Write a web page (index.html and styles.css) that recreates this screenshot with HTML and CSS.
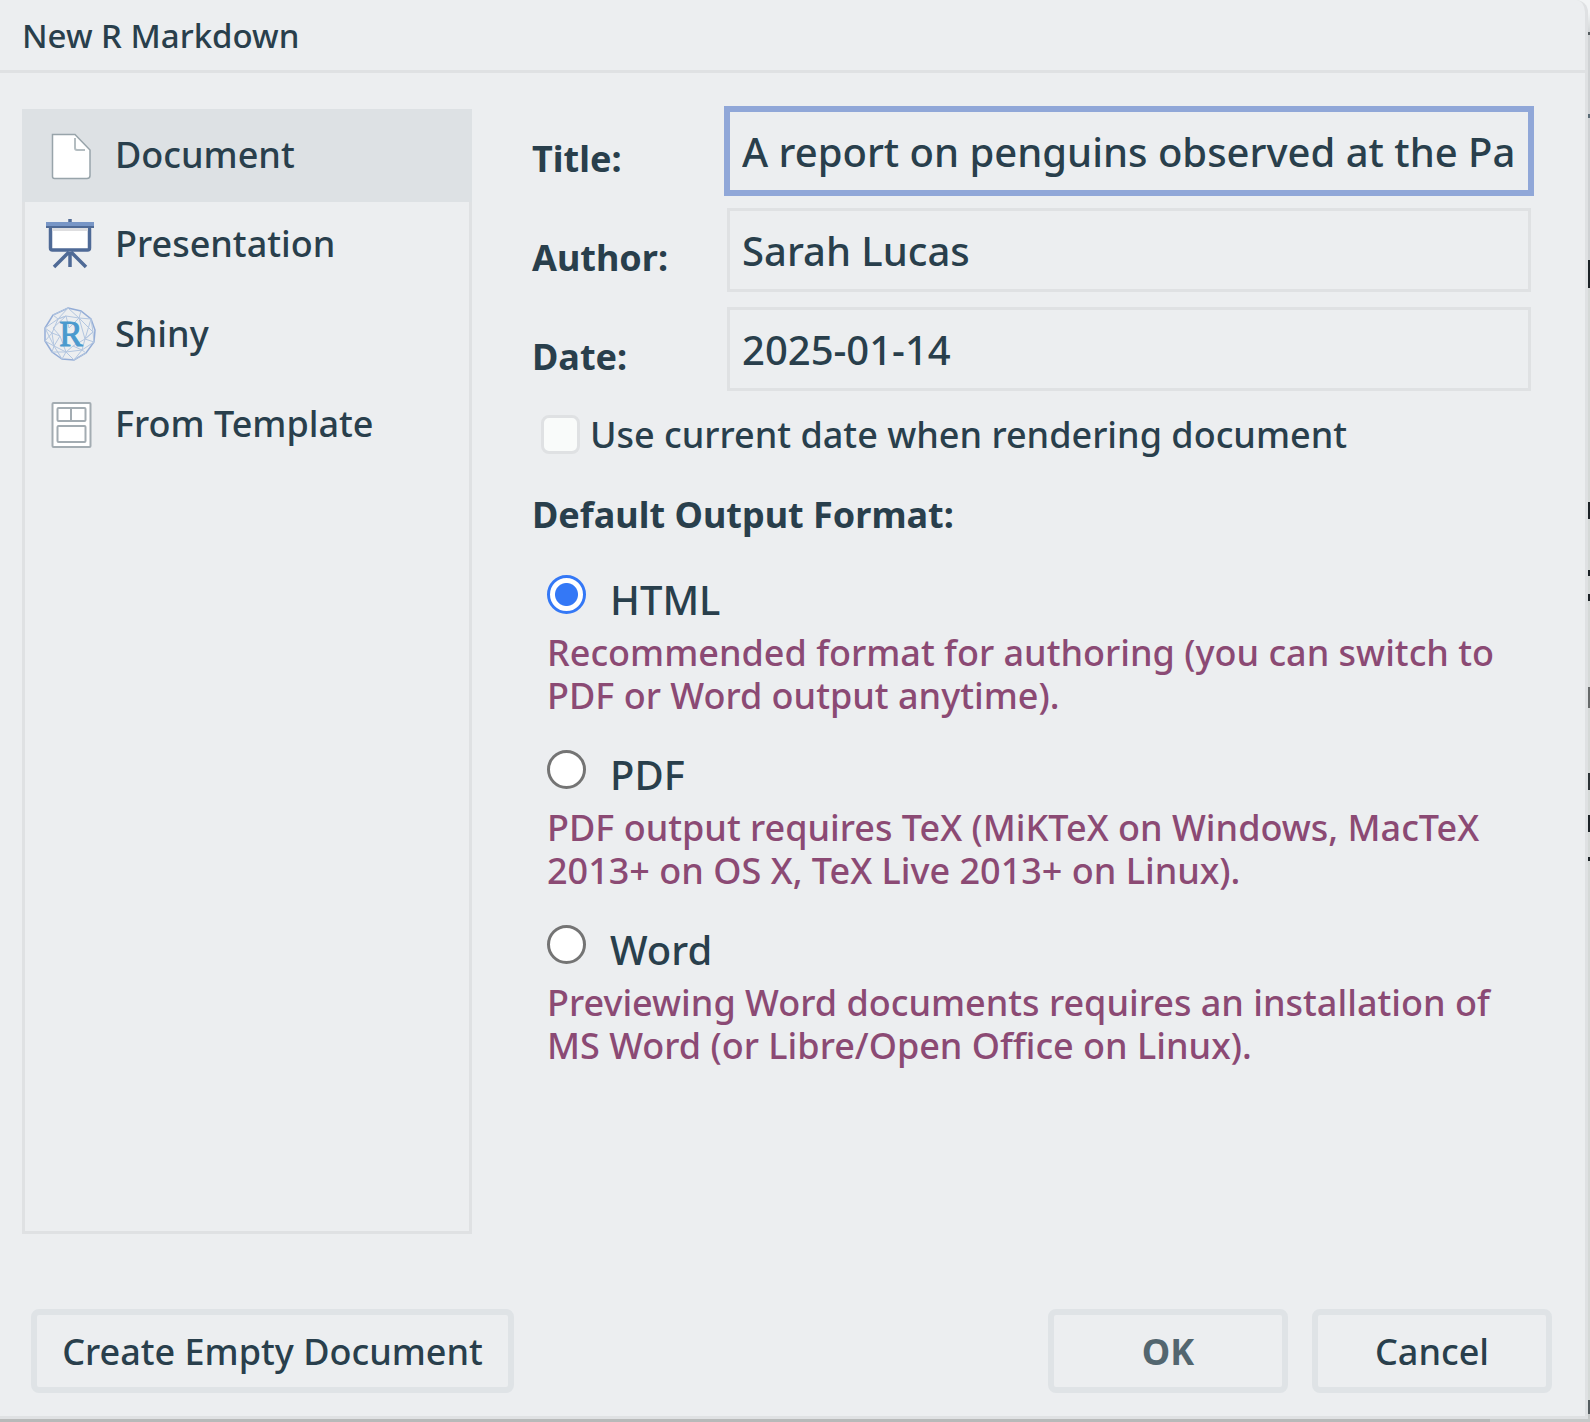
FILE: index.html
```html
<!DOCTYPE html>
<html lang="en">
<head>
<meta charset="utf-8">
<title>New R Markdown</title>
<link rel="stylesheet" href="styles.css">
</head>
<body>
<form class="dialog" role="dialog" aria-labelledby="dialog-title">
  <header class="dialog-header"><h1 class="dialog-title" id="dialog-title">New R Markdown</h1></header>
  <div class="dialog-body">
    <nav class="templates" aria-label="Template">
      <button type="button" class="template selected">
        <svg class="icon" viewBox="0 0 60 60" aria-hidden="true">
          <path d="M12.500 9.500H35L50 25V50.500Q50 53.500 47 53.500H14.500Q12.500 53.500 12.500 51.500Z" fill="#fff" stroke="#98a4aa" stroke-width="1.500"/>
          <path d="M35 13V23Q35 25 37 25H45" fill="none" stroke="#b4bdc1" stroke-width="2"/>
        </svg>
        <span>Document</span>
      </button>
      <button type="button" class="template">
        <svg class="icon" viewBox="0 0 60 60" aria-hidden="true">
          <path d="M30 6V11M30 39V54M29 39L14 54M31 39L46 54" fill="none" stroke="#4f6a96" stroke-width="3.500"/>
          <rect x="10.500" y="14" width="39" height="23" rx="2" fill="#fff" stroke="#4f6a96" stroke-width="3.500"/>
          <path d="M12 16.500H48" stroke="#dedee0" stroke-width="3"/>
          <path d="M6 9H54V15H6Z" fill="#4f6a96"/>
          <path d="M6 9H54V13H6Z" fill="#7896c6"/>
        </svg>
        <span>Presentation</span>
      </button>
      <button type="button" class="template">
        <svg class="icon" viewBox="0 -1 60 60" aria-hidden="true">
          <g fill="none" stroke="#b3c6e0" stroke-width="1">
            <path d="M28 4L41 7L51 15L55 26L54 38L46 49L34 56L22 55L12 48L5 37L5 24L13 11Z" stroke="#94add7" stroke-width="1.500"/>
            <path d="M13 11L28 4L39 14L51 15L53 28L45 35L54 38L42 46L46 49L34 56L26 48L22 55L14 42L5 37L12 29L5 24L18 15L28 4M41 7L39 14L26 12L18 15L13 11M18 15L12 29L14 42L26 48L42 46L45 35L39 14M51 15L45 35M5 24L14 42L12 48L26 48L34 56L42 46M18 15L26 12L29 24L39 14L53 28M12 29L20 32L14 42M20 32L26 48L33 42L42 46M26 12L13 24L20 32M33 42L45 35L53 28L54 38"/>
          </g>
          <text x="31" y="42" class="shiny-letter">R</text>
        </svg>
        <span>Shiny</span>
      </button>
      <button type="button" class="template">
        <svg class="icon" viewBox="0 0 60 60" aria-hidden="true">
          <g fill="#fff" stroke="#a3acb2" stroke-width="2">
            <rect x="12.500" y="10" width="38" height="44" rx="1"/>
            <rect x="17.500" y="15" width="28" height="13" rx="1"/>
            <path d="M31 15V28"/>
            <rect x="17.500" y="33" width="28" height="16" rx="1"/>
          </g>
        </svg>
        <span>From Template</span>
      </button>
    </nav>
    <main class="options">
      <div class="fields">
        <label class="field-label" for="title">Title:</label>
        <input class="field focused" id="title" type="text" value="A report on penguins observed at the Pa">
        <label class="field-label" for="author">Author:</label>
        <input class="field" id="author" type="text" value="Sarah Lucas">
        <label class="field-label" for="date">Date:</label>
        <input class="field" id="date" type="text" value="2025-01-14">
      </div>
      <label class="check-row"><input class="check" type="checkbox"><span>Use current date when rendering document</span></label>
      <fieldset class="formats">
        <legend class="formats-title">Default Output Format:</legend>
        <div class="format">
          <label class="format-row"><input class="radio" type="radio" name="format" checked aria-describedby="html-note"><span class="format-name">HTML</span></label>
          <p class="format-note" id="html-note">Recommended format for authoring (you can switch to PDF or Word output anytime).</p>
        </div>
        <div class="format">
          <label class="format-row"><input class="radio" type="radio" name="format" aria-describedby="pdf-note"><span class="format-name">PDF</span></label>
          <p class="format-note" id="pdf-note">PDF output requires TeX (MiKTeX on Windows, MacTeX 2013+ on OS X, TeX Live 2013+ on Linux).</p>
        </div>
        <div class="format">
          <label class="format-row"><input class="radio" type="radio" name="format" aria-describedby="word-note"><span class="format-name">Word</span></label>
          <p class="format-note" id="word-note">Previewing Word documents requires an installation of MS Word (or Libre/Open Office on Linux).</p>
        </div>
      </fieldset>
    </main>
  </div>
  <footer class="dialog-footer">
    <button type="button" class="button wide">Create Empty Document</button>
    <button type="submit" class="button primary">OK</button>
    <button type="button" class="button">Cancel</button>
  </footer>
</form>
</body>
</html>
```

FILE: styles.css
```css
* { box-sizing: border-box; }

body {
  margin: 0;
  min-height: 100vh;
  display: flex;
  padding: 0 2px 3px 0;
  /* the dimmed editor behind the dialog: its edge at the right, the shadow below */
  background:
    linear-gradient(#b7b9b9, #b7b9b9) left bottom / calc(100% - 100px) 3px no-repeat,
    linear-gradient(
      #f2f4f5 12px, #d3d6d8 32px, #555d60 32px 35px, #cfd2d4 35px 114px,
      #5a6b75 114px 118px, #cfd2d4 118px 260px, #1b2226 260px 288px,
      #d5d9d8 288px 502px, #1b2226 502px 519px, #d5d9d8 519px 570px,
      #1b2226 570px 576px, #d5d9d8 576px 594px, #1b2226 594px 601px,
      #d5d9d8 601px 687px, #666a6a 687px 708px, #d5d9d8 708px 773px,
      #2b3235 773px 790px, #d5d9d8 790px 815px, #1b2226 815px 832px,
      #d5d9d8 832px 857px, #1b2226 857px 861px, #d5d9d8 861px 1400px,
      #555d60 1400px 1414px, #c6c9c9 1414px);
  color: #293f4c;
  font-family: "Lucida Grande", "Noto Sans", sans-serif;
  font-size: 36px;
  font-weight: 500;
  line-height: 43px;
}

button, input { font: inherit; color: inherit; }

.dialog {
  flex: 1;
  display: flex;
  flex-direction: column;
  background: #eceef0;
  border: 3px solid #dfe1e3;
  border-width: 0 3px 3px 0;
  border-top-right-radius: 12px;
}

.dialog-header {
  padding: 14px 22px 13px;
  border-bottom: 3px solid #dfe1e3;
}

.dialog-title {
  margin: 0;
  font-size: 33px;
  font-weight: 500;
  line-height: 43px;
}

.dialog-body {
  flex: 1;
  display: flex;
  gap: 60px;
  padding: 36px 54px 75px 22px;
}

.templates {
  width: 450px;
  border: 3px solid #dfe1e3;
}

.template {
  display: flex;
  align-items: center;
  gap: 15px;
  width: 100%;
  height: 90px;
  padding: 0 15px 2px;
  border: 0;
  background: none;
  text-align: left;
}

.template.selected {
  background: #dde1e4;
  box-shadow: 0 0 0 3px #dde1e4;
  height: 87px;
}

.icon { width: 60px; height: 60px; flex: none; }

.shiny-letter {
  font: 35px "Liberation Serif", serif;
  fill: #4a9ace;
  stroke: #4a9ace;
  text-anchor: middle;
}

.options { flex: 1; }

.fields {
  display: grid;
  grid-template-columns: 195px 1fr;
  row-gap: 15px;
}

.field-label {
  font-weight: 700;
  padding-top: 28px;
}

.field {
  width: 100%;
  min-width: 0;
  height: 84px;
  padding: 0 6px 0 12px;
  border: 3px solid #dfe1e3;
  background: #eceef0;
  font-size: 40px;
  outline: 0;
}

.field.focused {
  border-color: #90a7d8;
  outline: 3px solid #90a7d8;
}

.check-row {
  display: flex;
  align-items: center;
  gap: 10px;
  margin: 22px 0 0 9px;
}

.check {
  appearance: none;
  width: 39px;
  height: 39px;
  margin: 0;
  border: 3px solid #dfe1e3;
  border-radius: 8px;
  background: #f9fbfa;
}

.formats {
  margin: 37px 0 0;
  padding: 0;
  border: 0;
}

.formats-title { padding: 0; font-weight: 700; }

.format { margin-top: 39px; padding-left: 15px; }
.format + .format { margin-top: 33px; }

.format-row {
  display: flex;
  align-items: flex-start;
  gap: 24px;
  height: 56px;
}

.radio {
  appearance: none;
  width: 39px;
  height: 39px;
  margin: 0;
  border: 3px solid #747474;
  border-radius: 50%;
  background: #fff;
}

.radio:checked {
  border-color: #3478f6;
  background: radial-gradient(circle, #3478f6 11px, #fff 12px);
}

.format-name { font-size: 40px; line-height: 49px; }

.format-note { margin: 0; color: #8b4a74; }

.dialog-footer {
  display: flex;
  gap: 24px;
  padding: 0 33px 23px 31px;
}

.button {
  width: 240px;
  height: 84px;
  padding: 0;
  border: 6px solid #dfe3e6;
  border-radius: 8px;
  background: #eceef0;
}

.button.wide { width: 483px; margin-right: auto; }
.button.primary { font-weight: 700; color: #53666f; }
```
